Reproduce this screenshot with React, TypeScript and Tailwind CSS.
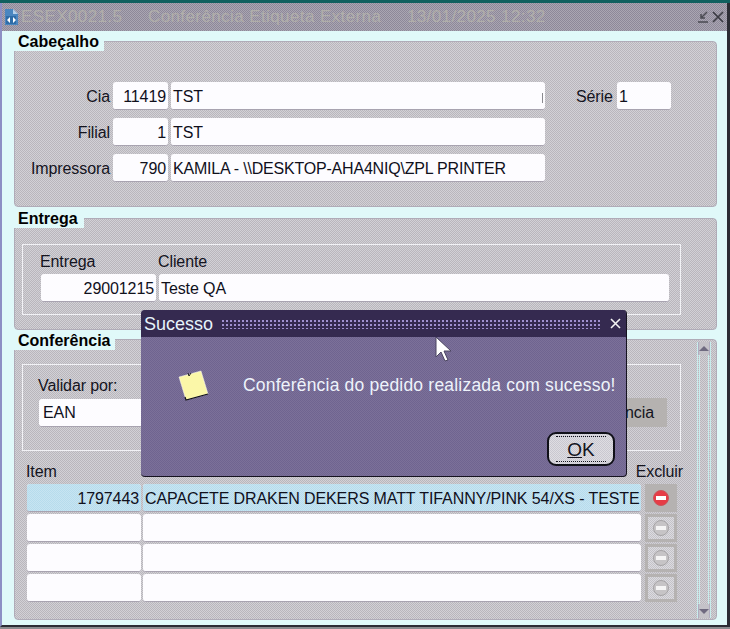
import React from "react";

const panel =
  "rounded-[4px] border border-[#b0acb8] bg-[repeating-conic-gradient(#b9b6bc_0_25%,#d2d1d6_0_50%)] bg-[length:2px_2px]";
const field =
  "flex h-[28px] items-center rounded-[3px] border-b border-[#a8a3b0] bg-[#fdfcff] px-[2px] text-[#10101c]";
const legend =
  "relative flex h-[18px] items-center bg-[#e0f9f9] pl-[4px] text-[16px] font-bold tracking-normal text-black";

function Field({
  w,
  value,
  right,
  tint,
  mark,
  pad,
  tight,
}: {
  w: number;
  value?: string;
  right?: boolean;
  tint?: boolean;
  mark?: boolean;
  pad?: boolean;
  tight?: boolean;
}) {
  return (
    <div
      className={`${field} ${right ? "justify-end" : mark ? "justify-between" : ""} ${pad ? "pl-[4px]" : ""} ${
        tint ? "bg-[repeating-conic-gradient(#b6dcec_0_25%,#c8e4f2_0_50%)] bg-[length:2px_2px]" : ""
      }`}
      style={{ width: w }}
    >
      <span className={`whitespace-pre pt-[2px] ${tight ? "tracking-[-0.2px]" : ""}`}>{value}</span>
      {mark && <span className="mt-[4px] h-[10px] w-px bg-[#8a8a90]" />}
    </div>
  );
}

function HeaderRow({
  label,
  code,
  name,
  mark,
  tight,
}: {
  label: string;
  code: string;
  name: string;
  mark?: boolean;
  tight?: boolean;
}) {
  return (
    <div className="flex items-center gap-[3px]">
      <span className="w-[95px] pt-[2px] text-right text-[#14141e]">{label}</span>
      <Field w={55} value={code} right />
      <Field w={374} value={name} mark={mark} tight={tight} />
    </div>
  );
}

function DeleteIcon({ active }: { active?: boolean }) {
  return (
    <div
      className={`flex h-[28px] w-[32px] items-center justify-center border-[3px] border-[#b5b2b1] ${
        active
          ? "bg-[#b5b2b1]"
          : "bg-[repeating-conic-gradient(#c4c2c8_0_25%,#dcdce0_0_50%)] bg-[length:2px_2px]"
      }`}
    >
      <svg width="16" height="16" viewBox="0 0 16 16">
        <circle
          cx="8"
          cy="8"
          r="7.5"
          fill={active ? "#e63c46" : "#c6c4c6"}
          stroke={active ? "#c9545a" : "#a5a3a5"}
          strokeWidth="1"
        />
        <rect x="3" y="6" width="10" height="4" fill={active ? "#ffffff" : "#f5f5f5"} />
      </svg>
    </div>
  );
}

const rows = [
  { code: "1797443", desc: "CAPACETE DRAKEN DEKERS MATT TIFANNY/PINK 54/XS - TESTE", active: true },
  { code: "", desc: "", active: false },
  { code: "", desc: "", active: false },
  { code: "", desc: "", active: false },
];

export default function App() {
  return (
    <div className="relative flex h-[629px] w-[730px] flex-col overflow-hidden bg-[#8b8b8f] font-['Liberation_Sans',sans-serif] text-[16px] tracking-[-0.1px]">
      <div className="h-[3px] bg-[#10605f]" />

      <div className="flex h-[624px] flex-col border-b-2 border-l-2 border-r-[3px] border-b-[#2c2c34] border-l-[#8d8fc4] border-r-[#2c2c34]">
        {/* title bar */}
        <div className="flex h-[28px] shrink-0 items-center bg-[repeating-conic-gradient(#8d8899_0_25%,#aaa6b2_0_50%)] bg-[length:2px_2px] pl-[2px] pr-[3px]">
          <svg width="15" height="18" viewBox="0 0 15 18" className="shrink-0">
            <path d="M1 1h8l5 5v11H1z" fill="#4a86c0" />
            <path d="M9 1l5 5H9z" fill="#b5d0ea" />
            <rect x="2" y="8" width="10" height="8" fill="#2f6da8" />
            <path d="M3 12l3-3v6zM12 12l-3-3v6z" fill="#ffffff" />
          </svg>
          <span className="ml-[2px] whitespace-pre text-[17px] tracking-[0.4px] text-[#b0aeaa]">
            ESEX0021.5{"     "}Conferência Etiqueta Externa{"     "}13/01/2025 12:32
          </span>
          <div className="ml-auto flex items-center gap-[3px]">
            <svg width="11" height="12" viewBox="0 0 11 12">
              <path d="M9 1L4 6M3 3v4h4M0 11h10" stroke="#4a4a52" strokeWidth="1.5" fill="none" />
            </svg>
            <svg width="12" height="12" viewBox="0 0 12 12">
              <path d="M1 1l10 10M11 1L1 11" stroke="#3c3c44" strokeWidth="1.7" fill="none" />
            </svg>
          </div>
        </div>

        {/* body */}
        <div className="flex flex-1 flex-col bg-[#e0f9f9] pl-[12px] pr-[10px] pt-[2px]">
          <div className={`${legend} w-[90px]`}>Cabeçalho</div>
          <div className={`${panel} -mt-[10px] h-[166px] pt-[40px]`}>
            <div className="flex flex-col gap-[8px]">
              <div className="flex items-center">
                <HeaderRow label="Cia" code="11419" name="TST" mark />
                <span className="ml-[31px] w-[38px] pt-[2px] text-[#14141e]">Série</span>
                <div className="ml-[3px]">
                  <Field w={54} value="1" />
                </div>
              </div>
              <HeaderRow label="Filial" code="1" name="TST" />
              <HeaderRow label="Impressora" code="790" name={"KAMILA - \\\\DESKTOP-AHA4NIQ\\ZPL PRINTER"} tight />
            </div>
          </div>

          <div className={`${legend} mt-[3px] w-[70px]`}>Entrega</div>
          <div className={`${panel} -mt-[10px] h-[112px] pl-[7px] pt-[25px]`}>
            <div className="flex h-[71px] w-[659px] flex-col border border-[#f2f2f6] pl-[18px] pr-[11px]">
              <div className="-ml-px flex h-[29px] items-end text-[#14141e]">
                <span className="w-[118px]">Entrega</span>
                <span>Cliente</span>
              </div>
              <div className="flex gap-[3px]">
                <Field w={115} value="29001215" right />
                <Field w={510} value="Teste QA" />
              </div>
            </div>
          </div>

          <div className={`${legend} mt-[2px] w-[101px]`}>Conferência</div>
          <div className={`${panel} -mt-[11px] flex h-[281px] pl-[7px] pr-[5px] pt-[2px]`}>
            <div className="w-[675px] pt-[22px]">
              <div className="flex h-[87px] w-[659px] flex-col border border-[#f2f2f6] pl-[16px] pr-[13px] pt-[9px]">
                <span className="-ml-px leading-[24px] text-[#14141e]">Validar por:</span>
                <div className="flex items-center justify-between">
                  <Field w={260} value="EAN" pad />
                  <div className="flex h-[29px] w-[110px] items-center justify-end bg-[#b5b2b0] pr-[13px] text-[#14141e]">
                    Conferência
                  </div>
                </div>
              </div>

              <div className="flex h-[33px] items-center pl-[4px] pr-[14px] pt-[8px] text-[#14141e]">
                <span>Item</span>
                <span className="ml-auto">Excluir</span>
              </div>

              <div className="flex flex-col gap-[2px] pl-[5px]">
                {rows.map((r, i) => (
                  <div key={i} className="flex items-center gap-[2px]">
                    <Field w={114} value={r.code} right tint={r.active} />
                    <Field w={498} value={r.desc} tint={r.active} />
                    <div className="ml-[2px]">
                      <DeleteIcon active={r.active} />
                    </div>
                  </div>
                ))}
              </div>
            </div>

            {/* scrollbar */}
            <div className="flex h-[276px] w-[14px] flex-col border-x border-[#c8ecec]">
              <div className="flex h-[13px] items-center justify-center border-x border-[#b0acc0] bg-[#c4c2c8]">
                <div className="h-0 w-0 border-x-[5px] border-b-[5px] border-x-transparent border-b-[#6f6a80]" />
              </div>
              <div className="mx-px flex-1 border-x border-[#c8ecec]" />
              <div className="flex h-[14px] items-center justify-center border-x border-[#b0acc0] bg-[#c4c2c8]">
                <div className="h-0 w-0 border-x-[5px] border-t-[5px] border-x-transparent border-t-[#6f6a80]" />
              </div>
            </div>
          </div>
        </div>
      </div>

      {/* dialog */}
      <div className="absolute left-[141px] top-[310px] flex h-[167px] w-[486px] flex-col overflow-hidden rounded-[4px] border-b border-r border-[#15121f] bg-[repeating-conic-gradient(#6f6490_0_25%,#7c7199_0_50%)] bg-[length:2px_2px]">
        <div className="flex h-[27px] shrink-0 items-center bg-[#352a50] pl-[3px] pr-[5px] text-[18px] tracking-normal text-[#e6f4fb]">
          <span className="pt-[2px]">Sucesso</span>
          <div className="ml-[8px] h-[10px] w-[380px] bg-[radial-gradient(#a090d0_1px,transparent_1px)] bg-[length:4px_4px]" />
          <svg width="11" height="11" viewBox="0 0 11 11" className="ml-auto">
            <path d="M1 1l9 9M10 1l-9 9" stroke="#f2f2f2" strokeWidth="1.6" fill="none" />
          </svg>
        </div>
        <div className="flex flex-1 flex-col">
          <div className="flex pl-[36px] pt-[33px]">
            <svg width="32" height="32" viewBox="0 0 32 32" className="shrink-0">
              <polygon points="2,7 24,1 31,24 9,30" fill="#fbf7a8" stroke="#fdfdfd" strokeWidth="0.5" />
              <path d="M31,24 L9,30 L8,27" stroke="#101018" strokeWidth="1.2" fill="none" />
              <path d="M11 3l1 3 2-3" stroke="#222" strokeWidth="1" fill="none" />
            </svg>
            <span className="ml-[34px] mt-[2px] whitespace-nowrap text-[17.5px] tracking-[0.2px] text-[#eef3fb]">
              Conferência do pedido realizada com sucesso!
            </span>
          </div>
          <div className="mr-[11px] mt-auto mb-[10px] self-end">
            <div className="flex h-[34px] w-[68px] flex-col items-center justify-center rounded-[9px] border-2 border-[#101018] bg-[repeating-conic-gradient(#c9c7d0_0_25%,#dedde2_0_50%)] bg-[length:2px_2px] text-[19px] tracking-normal text-[#14141e]">
              <div className="flex h-[26px] w-[50px] items-center justify-center border-y border-dotted border-[#14141e]">
                <span className="pt-[2px]">
                  <span className="underline">O</span>K
                </span>
              </div>
            </div>
          </div>
        </div>
      </div>

      {/* mouse pointer */}
      <svg width="20" height="28" viewBox="0 0 20 28" className="absolute left-[435px] top-[336px]">
        <path d="M1 1v20l5-5 4 9 3-1-4-9h7z" fill="#ffffff" stroke="#4a4460" strokeWidth="1" />
      </svg>
    </div>
  );
}
